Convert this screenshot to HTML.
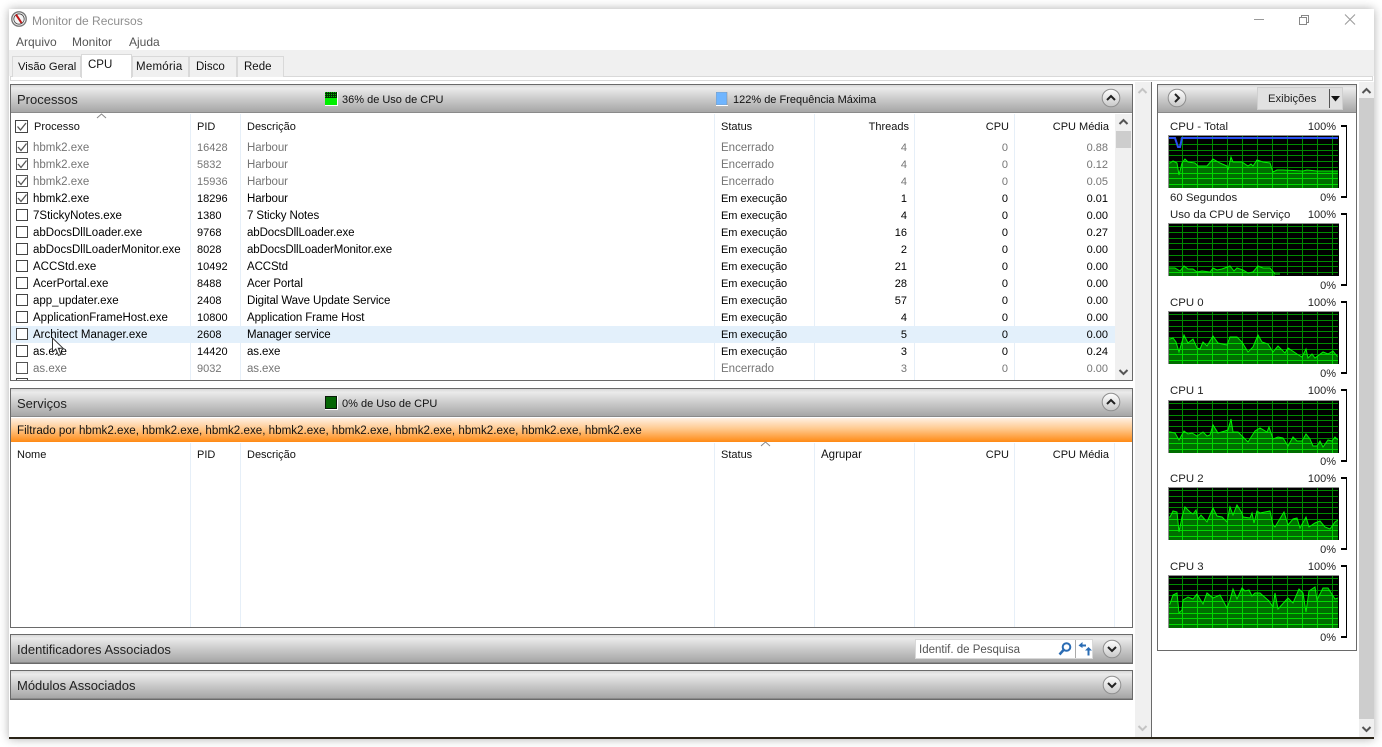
<!DOCTYPE html>
<html><head><meta charset="utf-8"><title>Monitor de Recursos</title>
<style>
html,body{margin:0;padding:0;width:1382px;height:747px;overflow:hidden;background:#fff;font-family:"Liberation Sans",sans-serif;font-size:12px;color:#000}
div,span,svg{position:absolute;white-space:nowrap;box-sizing:border-box}
#win{left:9px;top:9px;width:1365px;height:730px;background:#fff;box-shadow:0 0 9px rgba(0,0,0,.32)}
#page{left:0;top:0;width:1382px;height:747px}
.t{line-height:16px}
.tab{top:56px;height:21px;background:#f0f0f0;border:1px solid #d9d9d9;border-bottom:0;line-height:20px;padding-left:5px;color:#111}
.sec{left:10px;width:1123px;border:1px solid #6a6a6a;background:#fff}
.hd{left:0;top:0;width:1121px;height:28px;background:linear-gradient(#d8d8d8 0,#ebebeb 12%,#c8c8c8 55%,#a6a6a6 100%);border-bottom:1px solid #8a8a8a}
.ttl{left:6px;top:6px;font-size:13px;line-height:17px;color:#222}
.lab{top:7px;margin-top:1px;line-height:15px;color:#111;font-size:11px}
.h{top:0;margin-top:1px;line-height:16px;color:#111;font-size:11px}
.rw{left:11px;width:1104px;height:17px;line-height:17px;color:#000;font-size:11.5px}
.g{color:#757575}
.rw span{top:1px}
.a{left:22px}.b{left:186px;font-size:11px}.c{left:236px;letter-spacing:-.1px}.d{left:710px;font-size:11px;letter-spacing:-.05px}
.g .d{font-size:11.5px;letter-spacing:0}
.e{right:208px;text-align:right;font-size:11px}.f{right:107px;text-align:right;font-size:11px}.j{right:7px;text-align:right;font-size:11px}
.cb{left:5px;top:2px;width:12px;height:12px;border:1px solid #444;background:#fff}
.g .cb{border-color:#555}
.ln{top:0;width:1px;background:#e6eff8}
.gr{left:1168px;width:171px;height:53px;border-top:1px solid #8f8f8f;border-left:1px solid #8f8f8f;background:#000;overflow:hidden}
.gr svg{left:-1px!important;top:-1px!important;height:54px}
.gl{left:1170px;margin-top:1px;line-height:15px;color:#222;font-size:11.4px}
.gp{left:1296px;margin-top:1px;width:40px;text-align:right;line-height:15px;color:#222;font-size:11px}
.br{left:1341px;width:6px;height:73px;border:1px solid #000;border-left:0;border-top:2px solid #000;border-bottom:2px solid #000}
</style></head><body>
<div id="page">
<div id="win"></div>

<!-- title bar -->
<svg style="left:11px;top:11px" width="16" height="16" viewBox="0 0 16 16"><circle cx="8" cy="8" r="7.2" fill="#fff" stroke="#777" stroke-width="1.4"/><circle cx="8" cy="8" r="5.2" fill="#f4f4f4" stroke="#444" stroke-width=".8"/><path d="M5 3.6 L8 8 L10.5 12" stroke="#c01818" stroke-width="2" fill="none"/></svg>
<div class="t" style="left:32px;top:13px;color:#8f8f8f;font-size:12px">Monitor de Recursos</div>
<svg style="left:1250px;top:10px" width="110" height="20" viewBox="0 0 110 20"><path d="M4 9.5H14" stroke="#999" fill="none"/><path d="M49.5 7.5h7v7h-7z M51.5 7.5v-2h7v7h-2" stroke="#888" fill="none"/><path d="M95 4.5l10 10M105 4.5l-10 10" stroke="#999" fill="none"/></svg>
<div class="t" style="left:16px;top:34px;color:#555">Arquivo</div>
<div class="t" style="left:72px;top:34px;color:#555">Monitor</div>
<div class="t" style="left:129px;top:34px;color:#555">Ajuda</div>

<!-- tabs -->
<div style="left:9px;top:50px;width:1365px;height:26px;background:#f0f0f0"></div>
<div style="left:10px;top:76px;width:1363px;height:5px;background:#fff;border:1px solid #d9d9d9"></div>
<div class="tab" style="left:12px;width:69px;font-size:11.2px">Visão Geral</div>
<div class="tab" style="left:132px;width:57px;padding-left:3px;font-size:11.5px;letter-spacing:.25px">Memória</div>
<div class="tab" style="left:189px;width:48px;padding-left:6px;font-size:11.5px">Disco</div>
<div class="tab" style="left:237px;width:47px;padding-left:6px;font-size:11.5px">Rede</div>
<div class="tab" style="left:81px;top:54px;width:51px;height:24px;background:#fff;padding-left:6px;font-size:11.5px">CPU</div>

<!-- middle scrollbar -->
<div style="left:1135px;top:82px;width:16px;height:656px;background:#f0f0f0"></div>
<div style="left:1151px;top:82px;width:1px;height:656px;background:#6a6a6a"></div>
<svg style="left:1137px;top:87px" width="11" height="8"><path d="M1.5 6L5.5 2L9.5 6" stroke="#c4c4c4" stroke-width="2" fill="none"/></svg>
<svg style="left:1137px;top:724px" width="11" height="8"><path d="M1.5 2L5.5 6L9.5 2" stroke="#c4c4c4" stroke-width="2" fill="none"/></svg>

<!-- right scrollbar -->
<div style="left:1359px;top:82px;width:15px;height:656px;background:#f0f0f0"></div>
<div style="left:1359px;top:98px;width:15px;height:621px;background:#cdcdcd"></div>
<svg style="left:1361px;top:87px" width="11" height="8"><path d="M1.5 6L5.5 2L9.5 6" stroke="#555" stroke-width="2" fill="none"/></svg>
<svg style="left:1361px;top:725px" width="11" height="8"><path d="M1.5 2L5.5 6L9.5 2" stroke="#555" stroke-width="2" fill="none"/></svg>

<!-- Processos -->
<div class="sec" style="top:84px;height:297px">
 <div class="hd"><div class="ttl">Processos</div>
  <div class="lab" style="left:331px">36% de Uso de CPU</div>
  <div class="lab" style="left:722px">122% de Frequência Máxima</div>
 </div>
</div>
<svg style="left:325px;top:92px" width="13" height="14"><defs><pattern id="dt" patternUnits="userSpaceOnUse" width="2" height="2"><rect width="2" height="2" fill="#003000"/><rect width="1" height="1" fill="#00c000"/></pattern></defs><rect width="12" height="13" fill="url(#dt)"/><rect y="6" width="12" height="7" fill="#00f000"/><rect x="0" y="13" width="13" height="1" fill="#fff"/><rect x="12" width="1" height="14" fill="#fff"/></svg>
<svg style="left:716px;top:92px" width="12" height="14"><rect width="11" height="13" fill="#6fb5ff" stroke="#888" stroke-width=".5"/><rect y="13" width="12" height="1" fill="#fff"/></svg>
<div class="ln" style="left:190px;top:114px;height:266px"></div>
<div class="ln" style="left:240px;top:114px;height:266px"></div>
<div class="ln" style="left:714px;top:114px;height:266px"></div>
<div class="ln" style="left:814px;top:114px;height:266px"></div>
<div class="ln" style="left:914px;top:114px;height:266px"></div>
<div class="ln" style="left:1014px;top:114px;height:266px"></div>
<div style="left:11px;top:326px;width:1104px;height:17px;background:#e3f0fb"></div>

<svg style="left:96px;top:113px" width="11" height="6"><path d="M1 5L5.5 1L10 5" stroke="#888" fill="none"/></svg>
<div class="cb" style="left:15px;top:120px;width:13px;height:13px"></div>
<svg style="left:15px;top:120px" width="13" height="13"><path d="M2.5 6.5L5.5 10L11 3" stroke="#555" stroke-width="1.3" fill="none"/></svg>
<div class="h" style="left:34px;top:118px">Processo</div>
<div class="h" style="left:197px;top:118px">PID</div>
<div class="h" style="left:247px;top:118px">Descrição</div>
<div class="h" style="left:721px;top:118px">Status</div>
<div class="h" style="left:809px;width:100px;text-align:right;top:118px">Threads</div>
<div class="h" style="left:909px;width:100px;text-align:right;top:118px">CPU</div>
<div class="h" style="left:1009px;width:100px;text-align:right;top:118px">CPU Média</div>

<div class="rw g" style="top:139px"><div class="cb"></div><svg style="left:5px;top:2px" width="12" height="12"><path d="M2 6L5 9.5L10.5 2.5" stroke="#555" stroke-width="1.3" fill="none"/></svg><span class="a">hbmk2.exe</span><span class="b">16428</span><span class="c">Harbour</span><span class="d">Encerrado</span><span class="e">4</span><span class="f">0</span><span class="j">0.88</span></div>
<div class="rw g" style="top:156px"><div class="cb"></div><svg style="left:5px;top:2px" width="12" height="12"><path d="M2 6L5 9.5L10.5 2.5" stroke="#555" stroke-width="1.3" fill="none"/></svg><span class="a">hbmk2.exe</span><span class="b">5832</span><span class="c">Harbour</span><span class="d">Encerrado</span><span class="e">4</span><span class="f">0</span><span class="j">0.12</span></div>
<div class="rw g" style="top:173px"><div class="cb"></div><svg style="left:5px;top:2px" width="12" height="12"><path d="M2 6L5 9.5L10.5 2.5" stroke="#555" stroke-width="1.3" fill="none"/></svg><span class="a">hbmk2.exe</span><span class="b">15936</span><span class="c">Harbour</span><span class="d">Encerrado</span><span class="e">4</span><span class="f">0</span><span class="j">0.05</span></div>
<div class="rw" style="top:190px"><div class="cb"></div><svg style="left:5px;top:2px" width="12" height="12"><path d="M2 6L5 9.5L10.5 2.5" stroke="#555" stroke-width="1.3" fill="none"/></svg><span class="a">hbmk2.exe</span><span class="b">18296</span><span class="c">Harbour</span><span class="d">Em execução</span><span class="e">1</span><span class="f">0</span><span class="j">0.01</span></div>
<div class="rw" style="top:207px"><div class="cb"></div><span class="a">7StickyNotes.exe</span><span class="b">1380</span><span class="c">7 Sticky Notes</span><span class="d">Em execução</span><span class="e">4</span><span class="f">0</span><span class="j">0.00</span></div>
<div class="rw" style="top:224px"><div class="cb"></div><span class="a">abDocsDllLoader.exe</span><span class="b">9768</span><span class="c">abDocsDllLoader.exe</span><span class="d">Em execução</span><span class="e">16</span><span class="f">0</span><span class="j">0.27</span></div>
<div class="rw" style="top:241px"><div class="cb"></div><span class="a">abDocsDllLoaderMonitor.exe</span><span class="b">8028</span><span class="c">abDocsDllLoaderMonitor.exe</span><span class="d">Em execução</span><span class="e">2</span><span class="f">0</span><span class="j">0.00</span></div>
<div class="rw" style="top:258px"><div class="cb"></div><span class="a">ACCStd.exe</span><span class="b">10492</span><span class="c">ACCStd</span><span class="d">Em execução</span><span class="e">21</span><span class="f">0</span><span class="j">0.00</span></div>
<div class="rw" style="top:275px"><div class="cb"></div><span class="a">AcerPortal.exe</span><span class="b">8488</span><span class="c">Acer Portal</span><span class="d">Em execução</span><span class="e">28</span><span class="f">0</span><span class="j">0.00</span></div>
<div class="rw" style="top:292px"><div class="cb"></div><span class="a">app_updater.exe</span><span class="b">2408</span><span class="c">Digital Wave Update Service</span><span class="d">Em execução</span><span class="e">57</span><span class="f">0</span><span class="j">0.00</span></div>
<div class="rw" style="top:309px"><div class="cb"></div><span class="a">ApplicationFrameHost.exe</span><span class="b">10800</span><span class="c">Application Frame Host</span><span class="d">Em execução</span><span class="e">4</span><span class="f">0</span><span class="j">0.00</span></div>
<div class="rw" style="top:326px"><div class="cb"></div><span class="a">Architect Manager.exe</span><span class="b">2608</span><span class="c">Manager service</span><span class="d">Em execução</span><span class="e">5</span><span class="f">0</span><span class="j">0.00</span></div>
<div class="rw" style="top:343px"><div class="cb"></div><span class="a">as.exe</span><span class="b">14420</span><span class="c">as.exe</span><span class="d">Em execução</span><span class="e">3</span><span class="f">0</span><span class="j">0.24</span></div>
<div class="rw g" style="top:360px"><div class="cb"></div><span class="a">as.exe</span><span class="b">9032</span><span class="c">as.exe</span><span class="d">Encerrado</span><span class="e">3</span><span class="f">0</span><span class="j">0.00</span></div>
<div style="left:16px;top:378px;width:12px;height:2px;border:1px solid #444;border-bottom:0"></div>

<div style="left:1115px;top:114px;width:17px;height:266px;background:#f0f0f0"></div>
<div style="left:1116px;top:131px;width:15px;height:17px;background:#cdcdcd"></div>
<svg style="left:1118px;top:118px" width="11" height="8"><path d="M1.5 6L5.5 2L9.5 6" stroke="#555" stroke-width="2" fill="none"/></svg>
<svg style="left:1118px;top:368px" width="11" height="8"><path d="M1.5 2L5.5 6L9.5 2" stroke="#555" stroke-width="2" fill="none"/></svg>

<!-- Serviços -->
<div class="sec" style="top:388px;height:240px">
 <div class="hd"><div class="ttl">Serviços</div>
  <div class="lab" style="left:331px">0% de Uso de CPU</div>
 </div>
 <div style="left:0;top:29px;width:1121px;height:24px;background:linear-gradient(#fff0e2 0,#ffc98e 45%,#ff8a14 100%);line-height:26px;padding-left:6px;color:#111;font-size:11.62px">Filtrado por hbmk2.exe, hbmk2.exe, hbmk2.exe, hbmk2.exe, hbmk2.exe, hbmk2.exe, hbmk2.exe, hbmk2.exe, hbmk2.exe</div>
</div>
<svg style="left:325px;top:396px" width="13" height="14"><rect width="12" height="13" fill="#0a1a0a"/><rect x="1" y="1" width="10" height="11" fill="#056605"/><rect y="13" width="13" height="1" fill="#fff"/><rect x="12" width="1" height="14" fill="#fff"/></svg>
<div class="ln" style="left:190px;top:443px;height:184px"></div>
<div class="ln" style="left:240px;top:443px;height:184px"></div>
<div class="ln" style="left:714px;top:443px;height:184px"></div>
<div class="ln" style="left:814px;top:443px;height:184px"></div>
<div class="ln" style="left:914px;top:443px;height:184px"></div>
<div class="ln" style="left:1014px;top:443px;height:184px"></div>
<div class="ln" style="left:1114px;top:443px;height:184px"></div>
<svg style="left:760px;top:441px" width="11" height="6"><path d="M1 5L5.5 1L10 5" stroke="#888" fill="none"/></svg>
<div class="h" style="left:17px;top:446px">Nome</div>
<div class="h" style="left:197px;top:446px">PID</div>
<div class="h" style="left:247px;top:446px">Descrição</div>
<div class="h" style="left:721px;top:446px">Status</div>
<div class="h" style="left:821px;top:446px;font-size:11.5px">Agrupar</div>
<div class="h" style="left:909px;width:100px;text-align:right;top:446px">CPU</div>
<div class="h" style="left:1009px;width:100px;text-align:right;top:446px">CPU Média</div>

<!-- Identificadores -->
<div class="sec" style="top:634px;height:30px"><div class="hd"><div class="ttl">Identificadores Associados</div></div></div>
<div style="left:915px;top:639px;width:178px;height:20px;background:#fff;border:1px solid #d8d8d8;line-height:20px;padding-left:3px;color:#555;font-size:11.5px">Identif. de Pesquisa</div>
<div style="left:1075px;top:640px;width:1px;height:18px;background:#aaa"></div>
<svg style="left:1057px;top:641px" width="16" height="16"><circle cx="9.5" cy="6" r="3.8" fill="none" stroke="#2a6cb4" stroke-width="2"/><path d="M6.5 9L2.5 13.5" stroke="#2a6cb4" stroke-width="2.5"/></svg>
<svg style="left:1077px;top:640px" width="16" height="18"><path d="M5.5 2L1.5 5.5L5.5 8Z" fill="#2a6cb4"/><path d="M4 5.5H9" stroke="#2a6cb4" stroke-width="2"/><path d="M8 10.5L11.5 7L15 10.5Z" fill="#2a6cb4"/><path d="M11.5 9V15.5" stroke="#2a6cb4" stroke-width="2"/></svg>

<!-- Módulos -->
<div class="sec" style="top:670px;height:30px"><div class="hd"><div class="ttl">Módulos Associados</div></div></div>

<!-- chevron buttons -->
<svg style="left:1101px;top:88px" width="20" height="20"><defs><linearGradient id="cg" x1="0" y1="0" x2="0" y2="1"><stop offset="0" stop-color="#fff"/><stop offset="1" stop-color="#c8c8c8"/></linearGradient></defs><circle cx="10" cy="10" r="8.8" fill="url(#cg)" stroke="#8f8f8f"/><path d="M6 12L10 8L14 12" stroke="#222" stroke-width="2" fill="none"/></svg>
<svg style="left:1101px;top:392px" width="20" height="20"><circle cx="10" cy="10" r="8.8" fill="url(#cg)" stroke="#8f8f8f"/><path d="M6 12L10 8L14 12" stroke="#222" stroke-width="2" fill="none"/></svg>
<svg style="left:1102px;top:639px" width="20" height="20"><circle cx="10" cy="10" r="8.8" fill="url(#cg)" stroke="#8f8f8f"/><path d="M6 8L10 12L14 8" stroke="#222" stroke-width="2" fill="none"/></svg>
<svg style="left:1102px;top:675px" width="20" height="20"><circle cx="10" cy="10" r="8.8" fill="url(#cg)" stroke="#8f8f8f"/><path d="M6 8L10 12L14 8" stroke="#222" stroke-width="2" fill="none"/></svg>

<!-- right panel -->
<div style="left:1157px;top:84px;width:200px;height:567px;border:1px solid #6a6a6a;background:#fff"><div class="hd" style="width:198px"></div></div>
<svg style="left:1167px;top:88px" width="20" height="20"><circle cx="10" cy="10" r="8.8" fill="url(#cg)" stroke="#8f8f8f"/><path d="M8 6L12 10L8 14" stroke="#222" stroke-width="2" fill="none"/></svg>
<div style="left:1257px;top:87px;width:86px;height:23px;background:#e1e1e1;border:1px solid #d0d0d0;line-height:23px;padding-left:10px;color:#222;font-size:11.3px">Exibições</div>
<div style="left:1329px;top:89px;width:1px;height:19px;background:#555"></div>
<svg style="left:1330px;top:95px" width="12" height="8"><path d="M1 1H10L5.5 6.5Z" fill="#111"/></svg>

<svg width="0" height="0" style="left:0;top:0"><defs>
<pattern id="gd" patternUnits="userSpaceOnUse" width="15" height="52"><path d="M14.5 0V52M0 3.5H15M0 9.5H15M0 15.5H15M0 20.5H15M0 26.5H15M0 32.5H15M0 38.5H15M0 43.5H15M0 49.5H15" stroke="#008a00" fill="none"/></pattern>
<pattern id="gb" patternUnits="userSpaceOnUse" width="15" height="52"><path d="M14.5 0V52M0 3.5H15M0 9.5H15M0 15.5H15M0 20.5H15M0 26.5H15M0 32.5H15M0 38.5H15M0 43.5H15M0 49.5H15" stroke="#00d800" fill="none"/></pattern>
</defs></svg>

<!-- graph: total -->
<div class="gl" style="top:119px">CPU - Total</div><div class="gp" style="top:119px">100%</div>
<div class="br" style="top:125px"></div>
<div class="gr" style="top:135px"><svg style="left:0;top:0" width="170" height="52"><rect width="170" height="52" fill="url(#gd)"/>
<polygon points="0,53 0,28 2,28 5,26 9,28 11,40 14,28 17,24 20,27 27,28 30,31 39,31 45,24 52,28 59,31 60,35 63,22 65,27 74,27 80,31 83,29 85,31 89,25 95,27 102,28 105,37 109,35 115,35 135,36 139,35 149,36 152,36 170,36 170,53" fill="#006e00"/>
<polygon points="0,53 0,28 2,28 5,26 9,28 11,40 14,28 17,24 20,27 27,28 30,31 39,31 45,24 52,28 59,31 60,35 63,22 65,27 74,27 80,31 83,29 85,31 89,25 95,27 102,28 105,37 109,35 115,35 135,36 139,35 149,36 152,36 170,36 170,53" fill="url(#gb)"/>
<polyline points="0,28 2,28 5,26 9,28 11,40 14,28 17,24 20,27 27,28 30,31 39,31 45,24 52,28 59,31 60,35 63,22 65,27 74,27 80,31 83,29 85,31 89,25 95,27 102,28 105,37 109,35 115,35 135,36 139,35 149,36 152,36 170,36" fill="none" stroke="#00f000"/>
<path d="M6 2L13 2L10 11Z" fill="#000"/>
<polyline points="0,3 7,3 10,12 12,12 14,3 170,3" fill="none" stroke="#2a50f0" stroke-width="2"/></svg></div>
<div class="gl" style="top:190px">60 Segundos</div><div class="gp" style="top:190px">0%</div>

<!-- service -->
<div class="gl" style="top:207px">Uso da CPU de Serviço</div><div class="gp" style="top:207px">100%</div>
<div class="br" style="top:213px"></div>
<div class="gr" style="top:223px"><svg style="left:0;top:0" width="170" height="52"><rect width="170" height="52" fill="url(#gd)"/>
<polygon points="0,53 0,45 2,45 7,45 12,48 16,43 20,46 25,46 29,49 34,48 42,49 45,45 49,47 54,46 62,43 66,48 69,45 75,47 80,50 85,49 90,43 95,45 102,45 107,52 107,53" fill="#006e00"/>
<polygon points="0,53 0,45 2,45 7,45 12,48 16,43 20,46 25,46 29,49 34,48 42,49 45,45 49,47 54,46 62,43 66,48 69,45 75,47 80,50 85,49 90,43 95,45 102,45 107,52 107,53" fill="url(#gb)"/>
<polyline points="0,45 2,45 7,45 12,48 16,43 20,46 25,46 29,49 34,48 42,49 45,45 49,47 54,46 62,43 66,48 69,45 75,47 80,50 85,49 90,43 95,45 102,45 107,51 112,51" fill="none" stroke="#00f000"/></svg></div>
<div class="gp" style="top:278px">0%</div>

<!-- cpu0 -->
<div class="gl" style="top:295px">CPU 0</div><div class="gp" style="top:295px">100%</div>
<div class="br" style="top:301px"></div>
<div class="gr" style="top:311px"><svg style="left:0;top:0" width="170" height="52"><rect width="170" height="52" fill="url(#gd)"/>
<polygon points="0,53 0,28 2,28 5,27 8,31 11,41 16,24 20,32 25,28 29,37 32,38 35,31 39,35 45,25 50,32 59,34 62,26 69,26 74,31 80,41 85,36 90,24 94,31 100,33 105,41 110,35 117,42 120,37 129,43 134,46 138,38 140,47 144,43 147,47 155,41 160,43 165,40 169,45 170,45 170,53" fill="#006e00"/>
<polygon points="0,53 0,28 2,28 5,27 8,31 11,41 16,24 20,32 25,28 29,37 32,38 35,31 39,35 45,25 50,32 59,34 62,26 69,26 74,31 80,41 85,36 90,24 94,31 100,33 105,41 110,35 117,42 120,37 129,43 134,46 138,38 140,47 144,43 147,47 155,41 160,43 165,40 169,45 170,45 170,53" fill="url(#gb)"/>
<polyline points="0,28 2,28 5,27 8,31 11,41 16,24 20,32 25,28 29,37 32,38 35,31 39,35 45,25 50,32 59,34 62,26 69,26 74,31 80,41 85,36 90,24 94,31 100,33 105,41 110,35 117,42 120,37 129,43 134,46 138,38 140,47 144,43 147,47 155,41 160,43 165,40 169,45 170,45" fill="none" stroke="#00f000"/></svg></div>
<div class="gp" style="top:366px">0%</div>

<!-- cpu1 -->
<div class="gl" style="top:383px">CPU 1</div><div class="gp" style="top:383px">100%</div>
<div class="br" style="top:389px"></div>
<div class="gr" style="top:400px"><svg style="left:0;top:0" width="170" height="52"><rect width="170" height="52" fill="url(#gd)"/>
<polygon points="0,53 0,32 2,32 7,33 11,40 16,31 20,34 24,33 29,36 35,32 39,36 42,35 45,25 50,33 57,31 60,30 63,19 65,32 70,32 75,37 80,42 87,31 92,28 99,32 101,27 105,39 110,37 115,38 120,46 125,37 129,41 134,41 138,34 142,39 145,46 149,46 152,41 155,47 160,40 164,41 167,37 170,40 170,53" fill="#006e00"/>
<polygon points="0,53 0,32 2,32 7,33 11,40 16,31 20,34 24,33 29,36 35,32 39,36 42,35 45,25 50,33 57,31 60,30 63,19 65,32 70,32 75,37 80,42 87,31 92,28 99,32 101,27 105,39 110,37 115,38 120,46 125,37 129,41 134,41 138,34 142,39 145,46 149,46 152,41 155,47 160,40 164,41 167,37 170,40 170,53" fill="url(#gb)"/>
<polyline points="0,32 2,32 7,33 11,40 16,31 20,34 24,33 29,36 35,32 39,36 42,35 45,25 50,33 57,31 60,30 63,19 65,32 70,32 75,37 80,42 87,31 92,28 99,32 101,27 105,39 110,37 115,38 120,46 125,37 129,41 134,41 138,34 142,39 145,46 149,46 152,41 155,47 160,40 164,41 167,37 170,40" fill="none" stroke="#00f000"/></svg></div>
<div class="gp" style="top:454px">0%</div>

<!-- cpu2 -->
<div class="gl" style="top:471px">CPU 2</div><div class="gp" style="top:471px">100%</div>
<div class="br" style="top:477px"></div>
<div class="gr" style="top:487px"><svg style="left:0;top:0" width="170" height="52"><rect width="170" height="52" fill="url(#gd)"/>
<polygon points="0,53 0,30 2,30 5,24 9,25 11,45 14,30 17,20 22,25 25,27 28,23 30,32 33,28 39,35 45,21 49,29 54,30 59,35 62,20 65,28 69,18 74,26 75,30 82,31 84,26 86,36 89,24 92,26 102,24 105,38 107,40 116,25 120,38 125,32 129,31 132,41 138,30 141,40 147,36 152,34 157,40 162,42 167,35 170,33 170,53" fill="#006e00"/>
<polygon points="0,53 0,30 2,30 5,24 9,25 11,45 14,30 17,20 22,25 25,27 28,23 30,32 33,28 39,35 45,21 49,29 54,30 59,35 62,20 65,28 69,18 74,26 75,30 82,31 84,26 86,36 89,24 92,26 102,24 105,38 107,40 116,25 120,38 125,32 129,31 132,41 138,30 141,40 147,36 152,34 157,40 162,42 167,35 170,33 170,53" fill="url(#gb)"/>
<polyline points="0,30 2,30 5,24 9,25 11,45 14,30 17,20 22,25 25,27 28,23 30,32 33,28 39,35 45,21 49,29 54,30 59,35 62,20 65,28 69,18 74,26 75,30 82,31 84,26 86,36 89,24 92,26 102,24 105,38 107,40 116,25 120,38 125,32 129,31 132,41 138,30 141,40 147,36 152,34 157,40 162,42 167,35 170,33" fill="none" stroke="#00f000"/></svg></div>
<div class="gp" style="top:542px">0%</div>

<!-- cpu3 -->
<div class="gl" style="top:559px">CPU 3</div><div class="gp" style="top:559px">100%</div>
<div class="br" style="top:565px"></div>
<div class="gr" style="top:575px"><svg style="left:0;top:0" width="170" height="52"><rect width="170" height="52" fill="url(#gd)"/>
<polygon points="0,53 0,29 2,29 5,20 9,18 11,38 14,35 15,25 20,22 25,24 29,19 35,29 39,18 45,23 52,20 59,33 62,25 65,14 69,24 74,13 77,16 81,15 84,21 87,18 92,18 101,26 105,32 107,18 110,34 120,23 125,28 131,14 135,18 138,37 141,16 147,12 149,25 155,13 160,13 167,24 170,23 170,53" fill="#006e00"/>
<polygon points="0,53 0,29 2,29 5,20 9,18 11,38 14,35 15,25 20,22 25,24 29,19 35,29 39,18 45,23 52,20 59,33 62,25 65,14 69,24 74,13 77,16 81,15 84,21 87,18 92,18 101,26 105,32 107,18 110,34 120,23 125,28 131,14 135,18 138,37 141,16 147,12 149,25 155,13 160,13 167,24 170,23 170,53" fill="url(#gb)"/>
<polyline points="0,29 2,29 5,20 9,18 11,38 14,35 15,25 20,22 25,24 29,19 35,29 39,18 45,23 52,20 59,33 62,25 65,14 69,24 74,13 77,16 81,15 84,21 87,18 92,18 101,26 105,32 107,18 110,34 120,23 125,28 131,14 135,18 138,37 141,16 147,12 149,25 155,13 160,13 167,24 170,23" fill="none" stroke="#00f000"/></svg></div>
<div class="gp" style="top:630px">0%</div>

<!-- bottom line -->
<div style="left:9px;top:737px;width:1365px;height:2px;background:#2a2418"></div>

<!-- cursor -->
<svg style="left:51px;top:337px" width="14" height="22"><path d="M1.5 1V15L4.8 12L7.5 18.5L10 17.5L7.3 11.2H12Z" fill="#fff" stroke="#333" stroke-width="1"/></svg>
</div>
</body></html>
